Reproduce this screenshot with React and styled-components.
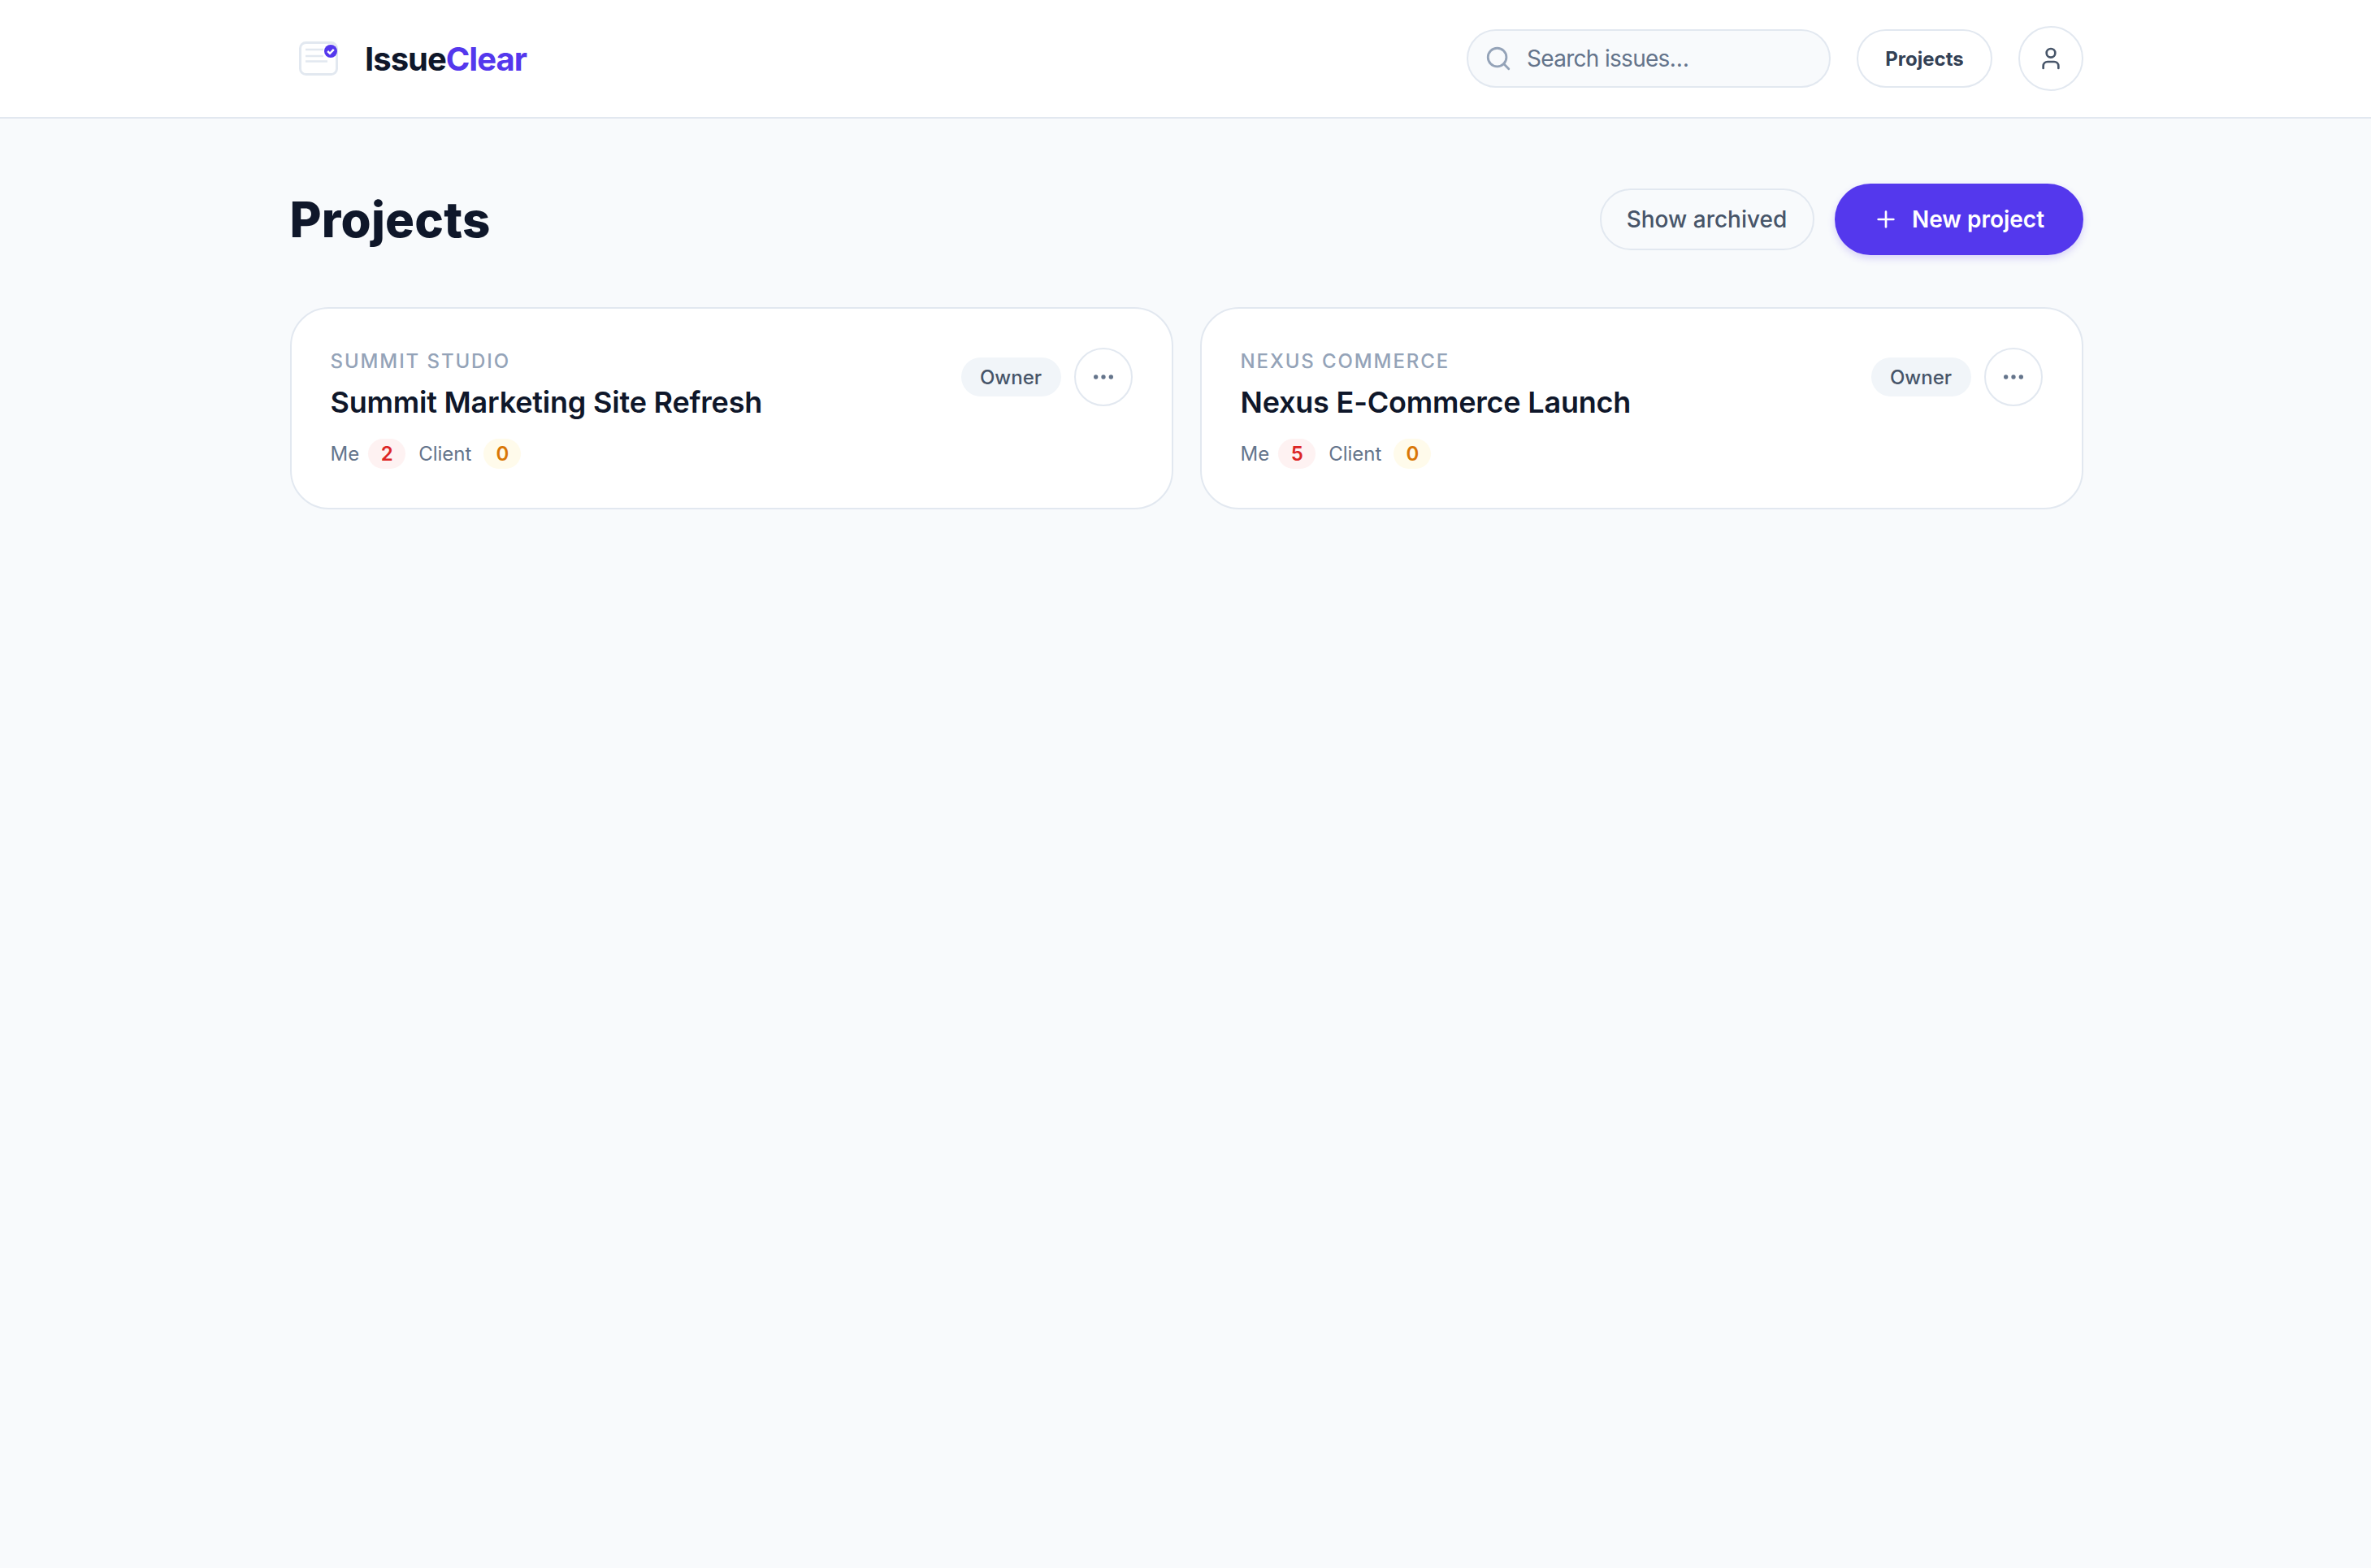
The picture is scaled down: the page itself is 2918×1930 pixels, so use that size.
import React from 'react';
import styled, { createGlobalStyle } from 'styled-components';
import { Search, User, Plus, Ellipsis } from 'lucide-react';

const GlobalStyle = createGlobalStyle`
  body {
    margin: 0;
    background: #f8fafc;
    font-family: Inter, "Liberation Sans", sans-serif;
    color: #0f172a;
  }
`;

const Page = styled.div`
  min-height: 100vh;
`;

const Header = styled.header`
  height: 144px;
  background: #fff;
  border-bottom: 2px solid #e2e8f0;
  padding-left: 2px;
  display: flex;
  justify-content: center;
`;

const HeaderInner = styled.div`
  width: 2208px;
  display: flex;
  align-items: center;
  justify-content: space-between;
`;

const Brand = styled.div`
  display: flex;
  align-items: center;
  gap: 33px;
  padding-left: 12px;
`;

const BrandName = styled.div`
  font-size: 40px;
  font-weight: 700;
  letter-spacing: -1px;
  span {
    color: #5438ed;
  }
`;

const HeaderActions = styled.div`
  display: flex;
  align-items: center;
  gap: 32px;
`;

const SearchBox = styled.label`
  width: 448px;
  height: 72px;
  box-sizing: border-box;
  padding: 0 20px;
  display: flex;
  align-items: center;
  gap: 18px;
  background: #f8fafc;
  border: 2px solid #e2e8f0;
  border-radius: 36px;
  color: #94a3b8;
`;

const SearchInput = styled.input`
  flex: 1;
  min-width: 0;
  border: 0;
  outline: 0;
  padding: 0;
  background: transparent;
  font: 400 28px Inter, "Liberation Sans", sans-serif;
  letter-spacing: -0.7px;
  color: #64748b;
  &::placeholder {
    color: #64748b;
    opacity: 1;
  }
`;

const NavButton = styled.button`
  width: 167px;
  height: 72px;
  padding: 0;
  background: #fff;
  border: 2px solid #e2e8f0;
  border-radius: 36px;
  font: 700 24px Inter, "Liberation Sans", sans-serif;
  color: #334155;
`;

const AvatarButton = styled.button`
  width: 80px;
  height: 80px;
  padding: 0;
  display: flex;
  align-items: center;
  justify-content: center;
  background: #fff;
  border: 2px solid #e2e8f0;
  border-radius: 50%;
  color: #475569;
`;

const Main = styled.main`
  width: 2207px;
  margin-left: calc(50% - 1102.5px);
  padding-top: 80px;
`;

const TitleRow = styled.div`
  display: flex;
  align-items: center;
  justify-content: space-between;
  margin-bottom: 64px;
`;

const Title = styled.h1`
  margin: 0;
  font-size: 60px;
  font-weight: 800;
  letter-spacing: 0.2px;
`;

const TitleActions = styled.div`
  display: flex;
  align-items: center;
  gap: 25px;
`;

const ArchivedButton = styled.button`
  width: 264px;
  height: 76px;
  padding: 0;
  background: #f8fafc;
  border: 2px solid #e2e8f0;
  border-radius: 38px;
  font: 500 28px Inter, "Liberation Sans", sans-serif;
  color: #475569;
`;

const NewButton = styled.button`
  width: 306px;
  height: 88px;
  padding: 0;
  display: flex;
  align-items: center;
  justify-content: center;
  gap: 16px;
  background: #5438ed;
  border: 0;
  border-radius: 44px;
  box-shadow: 0 4px 10px rgba(84, 56, 237, 0.2);
  font: 600 28px Inter, "Liberation Sans", sans-serif;
  color: #fff;
`;

const CardGrid = styled.div`
  display: grid;
  grid-template-columns: 1fr 1fr;
  gap: 33px;
`;

const Card = styled.article`
  height: 249px;
  box-sizing: border-box;
  padding: 48px;
  display: flex;
  justify-content: space-between;
  align-items: flex-start;
  background: #fff;
  border: 2px solid #e2e8f0;
  border-radius: 48px;
`;

const CardBody = styled.div`
  display: flex;
  flex-direction: column;
  padding-top: 2px;
`;

const Client = styled.div`
  font-size: 24px;
  line-height: 30px;
  font-weight: 500;
  letter-spacing: 1.9px;
  color: #94a3b8;
  text-transform: uppercase;
`;

const ProjectName = styled.h2`
  margin: 12px 0 0;
  font-size: 36px;
  line-height: 46px;
  font-weight: 600;
  letter-spacing: -0.2px;
`;

const Counts = styled.div`
  margin-top: 22px;
  display: flex;
  align-items: center;
  gap: 11px;
  font-size: 24px;
  color: #64748b;
`;

const CountPill = styled.span`
  width: 46px;
  height: 37px;
  margin: 0 5px 0 ${p => (p.$tone === 'red' ? '0' : '4px')};
  display: flex;
  align-items: center;
  justify-content: center;
  border-radius: 19px;
  font-weight: 600;
  background: ${p => (p.$tone === 'red' ? '#fef2f2' : '#fffbeb')};
  color: ${p => (p.$tone === 'red' ? '#dc2626' : '#d97706')};
`;

const CardActions = styled.div`
  display: flex;
  align-items: center;
  gap: 16px;
`;

const RoleBadge = styled.span`
  width: 123px;
  height: 48px;
  display: flex;
  align-items: center;
  justify-content: center;
  background: #f1f5f9;
  border-radius: 24px;
  font-size: 24px;
  font-weight: 500;
  color: #475569;
`;

const MoreButton = styled.button`
  width: 72px;
  height: 72px;
  padding: 0;
  display: flex;
  align-items: center;
  justify-content: center;
  background: #fff;
  border: 2px solid #e2e8f0;
  border-radius: 50%;
  color: #64748b;
`;

const LogoIcon = () => (
  <svg width="48" height="42" viewBox="0 0 48 42" fill="none">
    <rect x="1.5" y="1.5" width="45" height="39" rx="7" fill="#fff" stroke="#e2e8f0" strokeWidth="3" />
    <path d="M8 10h22M8 18h22M8 24.5h27" stroke="#e2e8f0" strokeWidth="2.6" />
    <circle cx="39" cy="12" r="8" fill="#5438ed" />
    <path d="M35.2 12l2.8 2.8 4.8-5" stroke="#fff" strokeWidth="2.5" fill="none" />
  </svg>
);

const projects = [
  { client: 'Summit Studio', name: 'Summit Marketing Site Refresh', me: 2, clientCount: 0 },
  { client: 'Nexus Commerce', name: 'Nexus E-Commerce Launch', me: 5, clientCount: 0 },
];

export default function App() {
  return (
    <Page>
      <GlobalStyle />
      <Header>
        <HeaderInner>
          <Brand>
            <LogoIcon />
            <BrandName>
              Issue<span>Clear</span>
            </BrandName>
          </Brand>
          <HeaderActions>
            <SearchBox>
              <Search size={34} strokeWidth={2} />
              <SearchInput placeholder="Search issues…" />
            </SearchBox>
            <NavButton>Projects</NavButton>
            <AvatarButton>
              <User size={32} strokeWidth={2} />
            </AvatarButton>
          </HeaderActions>
        </HeaderInner>
      </Header>
      <Main>
        <TitleRow>
          <Title>Projects</Title>
          <TitleActions>
            <ArchivedButton>Show archived</ArchivedButton>
            <NewButton>
              <Plus size={32} strokeWidth={2} />
              New project
            </NewButton>
          </TitleActions>
        </TitleRow>
        <CardGrid>
          {projects.map(project => (
            <Card key={project.name}>
              <CardBody>
                <Client>{project.client}</Client>
                <ProjectName>{project.name}</ProjectName>
                <Counts>
                  Me
                  <CountPill $tone="red">{project.me}</CountPill>
                  Client
                  <CountPill $tone="amber">{project.clientCount}</CountPill>
                </Counts>
              </CardBody>
              <CardActions>
                <RoleBadge>Owner</RoleBadge>
                <MoreButton>
                  <Ellipsis size={32} strokeWidth={2} />
                </MoreButton>
              </CardActions>
            </Card>
          ))}
        </CardGrid>
      </Main>
    </Page>
  );
}
